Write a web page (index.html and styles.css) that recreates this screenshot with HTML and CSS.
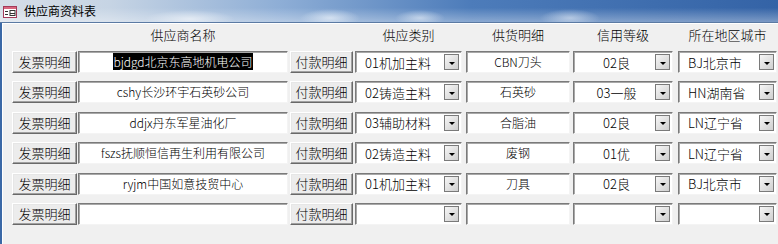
FILE: index.html
```html
<!DOCTYPE html>
<html>

<head>
  <meta charset="UTF-8">
  <link rel="stylesheet" href="styles.css">
</head>

<body>
  <div class="window">
    <div class="titlebar">
      <svg class="icon" width="14" height="12" viewBox="0 0 14 12">
        <rect x="0.5" y="0.5" width="13" height="11" fill="#fff" stroke="#a33a5a"/>
        <rect x="1" y="1" width="12" height="2" fill="#d9667f"/>
        <rect x="2" y="5" width="3" height="1" fill="#333"/>
        <rect x="2" y="8" width="3" height="1" fill="#333"/>
        <rect x="7" y="4.5" width="5" height="5" fill="none" stroke="#333"/>
        <rect x="7" y="7" width="5" height="1" fill="#333"/>
      </svg>
      <span class="title">供应商资料表</span>
    </div>

    <div class="form">
      <div class="head">
        <div class="c1"></div>
        <div class="c2">供应商名称</div>
        <div class="c3"></div>
        <div class="c4">供应类别</div>
        <div class="c5">供货明细</div>
        <div class="c6">信用等级</div>
        <div class="c7">所在地区城市</div>
      </div>

      <div class="row">
        <div class="btn c1">发票明细</div>
        <div class="box c2 center"><span class="sel">bjdgd北京东高地机电公司</span></div>
        <div class="btn c3">付款明细</div>
        <div class="box combo c4"><span class="val left">01机加主料</span><span class="arrow"></span></div>
        <div class="box c5 center">CBN刀头</div>
        <div class="box combo c6"><span class="val center">02良</span><span class="arrow"></span></div>
        <div class="box combo c7"><span class="val left">BJ北京市</span><span class="arrow"></span></div>
      </div>

      <div class="row">
        <div class="btn c1">发票明细</div>
        <div class="box c2 center">cshy长沙环宇石英砂公司</div>
        <div class="btn c3">付款明细</div>
        <div class="box combo c4"><span class="val left">02铸造主料</span><span class="arrow"></span></div>
        <div class="box c5 center">石英砂</div>
        <div class="box combo c6"><span class="val center">03一般</span><span class="arrow"></span></div>
        <div class="box combo c7"><span class="val left">HN湖南省</span><span class="arrow"></span></div>
      </div>

      <div class="row">
        <div class="btn c1">发票明细</div>
        <div class="box c2 center">ddjx丹东军星油化厂</div>
        <div class="btn c3">付款明细</div>
        <div class="box combo c4"><span class="val left">03辅助材料</span><span class="arrow"></span></div>
        <div class="box c5 center">合脂油</div>
        <div class="box combo c6"><span class="val center">02良</span><span class="arrow"></span></div>
        <div class="box combo c7"><span class="val left">LN辽宁省</span><span class="arrow"></span></div>
      </div>

      <div class="row">
        <div class="btn c1">发票明细</div>
        <div class="box c2 center">fszs抚顺恒信再生利用有限公司</div>
        <div class="btn c3">付款明细</div>
        <div class="box combo c4"><span class="val left">02铸造主料</span><span class="arrow"></span></div>
        <div class="box c5 center">废钢</div>
        <div class="box combo c6"><span class="val center">01优</span><span class="arrow"></span></div>
        <div class="box combo c7"><span class="val left">LN辽宁省</span><span class="arrow"></span></div>
      </div>

      <div class="row">
        <div class="btn c1">发票明细</div>
        <div class="box c2 center">ryjm中国如意技贸中心</div>
        <div class="btn c3">付款明细</div>
        <div class="box combo c4"><span class="val left">01机加主料</span><span class="arrow"></span></div>
        <div class="box c5 center">刀具</div>
        <div class="box combo c6"><span class="val center">02良</span><span class="arrow"></span></div>
        <div class="box combo c7"><span class="val left">BJ北京市</span><span class="arrow"></span></div>
      </div>

      <div class="row">
        <div class="btn c1">发票明细</div>
        <div class="box c2 center"></div>
        <div class="btn c3">付款明细</div>
        <div class="box combo c4"><span class="val left"></span><span class="arrow"></span></div>
        <div class="box c5 center"></div>
        <div class="box combo c6"><span class="val center"></span><span class="arrow"></span></div>
        <div class="box combo c7"><span class="val left"></span><span class="arrow"></span></div>
      </div>
    </div>
  </div>
</body>

</html>
```

FILE: styles.css
```css
body {
  margin: 0;
  font-family: "Noto Sans CJK SC", "Noto Sans", sans-serif;
  font-weight: 300;
  color: #000;
}
div.window {
  width: 778px;
  height: 244px;
  overflow: hidden;
  display: flex;
  flex-direction: column;
}
div.titlebar {
  height: 22px;
  flex: none;
  display: flex;
  align-items: center;
  border-bottom: 1px solid #5b7aa3;
  background:
    radial-gradient(ellipse 45px 9px at 190px 19px, rgba(255,255,255,.55), transparent),
    radial-gradient(ellipse 30px 9px at 330px 18px, rgba(235,242,250,.7), transparent),
    radial-gradient(ellipse 25px 8px at 420px 18px, rgba(235,242,250,.6), transparent),
    radial-gradient(ellipse 30px 9px at 570px 18px, rgba(235,242,250,.55), transparent),
    linear-gradient(to bottom, rgba(255,255,255,0) 35%, rgba(255,255,255,.35)),
    linear-gradient(to right, #d6dee8 0, #c6d4e4 110px, #8eaed6 280px, #4d7cba 470px, #3463a6 778px);
}
svg.icon {
  margin-left: 3px;
  margin-top: 1px;
}
span.title {
  margin-left: 7px;
  font-size: 12px;
  line-height: 14px;
  font-weight: 400;
}
div.form {
  flex: 1;
  background-color: #f0f0f0;
  border-left: 2px solid #3a68a6;
  box-shadow: inset 1px 1px 0 #fff;
  padding: 4px 0 0 10px;
}
div.head {
  display: flex;
  height: 16px;
  margin-bottom: 8px;
  font-size: 13px;
  line-height: 16px;
  text-align: center;
}
div.row {
  display: flex;
  height: 22px;
  margin-bottom: 8.4px;
}
.c1 { width: 65px; flex: none; }
.c2 { width: 210px; margin-left: 1px; flex: none; }
.c3 { width: 63px; margin-left: 2px; flex: none; }
.c4 { width: 107px; margin-left: 2px; flex: none; }
.c5 { width: 104px; margin-left: 4px; flex: none; }
.c6 { width: 100px; margin-left: 3px; flex: none; }
.c7 { width: 99px; margin-left: 5px; flex: none; }

div.btn {
  box-sizing: border-box;
  height: 22px;
  border: 1px solid;
  border-color: #fff #696969 #696969 #fff;
  box-shadow: inset -1px -1px 0 #a0a0a0, inset 1px 1px 0 #e6e6e6;
  background-color: #ececec;
  font-size: 13px;
  line-height: 19px;
  text-align: center;
}
div.box {
  box-sizing: border-box;
  height: 22px;
  background-color: #fff;
  border: 1px solid;
  border-color: #7a7a7a #f4f4f4 #f4f4f4 #7a7a7a;
  box-shadow: inset 1px 1px 0 #a8a8a8;
  font-size: 12px;
  line-height: 19px;
  white-space: nowrap;
  overflow: hidden;
}
div.combo {
  display: flex;
  align-items: center;
  font-size: 13px;
}
.center { text-align: center; }
span.val {
  flex: 1;
  line-height: 19px;
}
span.val.left { padding-left: 9px; }
span.val.center { padding-left: 4px; }
span.sel {
  background-color: #000;
  color: #fff;
}
span.arrow {
  box-sizing: border-box;
  width: 15px;
  height: 16px;
  margin-right: 2px;
  flex: none;
  border: 1px solid #7a7a7a;
  background: linear-gradient(135deg, #f6f6f6, #cfcfcf);
  display: flex;
  align-items: center;
  justify-content: center;
}
span.arrow::after {
  content: "";
  border-left: 3px solid transparent;
  border-right: 3px solid transparent;
  border-top: 3px solid #000;
  margin-top: 2px;
}
```
